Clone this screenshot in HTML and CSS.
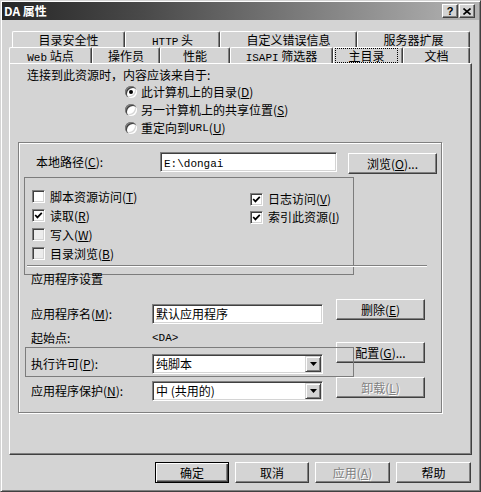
FILE: index.html
```html
<!DOCTYPE html>
<html lang="zh-CN">
<head>
<meta charset="utf-8">
<title>DA 属性</title>
<link rel="stylesheet" href="styles.css">
</head>
<body>
<div class="window">
  <div class="titlebar">
    <span class="title">DA 属性</span>
    <div class="caps">
      <span class="cap help">?</span>
      <span class="cap close"><svg width="8" height="7" viewBox="0 0 8 7"><path d="M0.5 0.5 L7.5 6.5 M7.5 0.5 L0.5 6.5" stroke="#000" stroke-width="1.6"/></svg></span>
    </div>
  </div>

  <div class="tabs">
    <div class="tabrow back">
      <div class="tab t-sec">目录安全性</div>
      <div class="tab t-http"><span class="m">HTTP</span> 头</div>
      <div class="tab t-err">自定义错误信息</div>
      <div class="tab t-ext">服务器扩展</div>
    </div>
    <div class="tabrow front">
      <div class="tab t-web"><span class="m">Web</span> 站点</div>
      <div class="tab t-op">操作员</div>
      <div class="tab t-perf">性能</div>
      <div class="tab t-isapi"><span class="m">ISAPI</span> 筛选器</div>
      <div class="tab t-home sel"><span class="focus">主目录</span></div>
      <div class="tab t-doc">文档</div>
    </div>
  </div>

  <div class="panel">
    <div class="intro">连接到此资源时，内容应该来自于:</div>
    <div class="radios">
      <div class="opt"><span class="radio on"></span>此计算机上的目录(<u>D</u>)</div>
      <div class="opt"><span class="radio"></span>另一计算机上的共享位置(<u>S</u>)</div>
      <div class="opt"><span class="radio"></span>重定向到 <span class="m">URL</span>(<u>U</u>)</div>
    </div>

    <div class="group">
      <div class="path-row">
        <span class="path-label">本地路径(<u>C</u>):</span>
        <div class="field path-field"><span class="m">E:\dongai</span></div>
        <div class="btn browse">浏览(<u>O</u>)...</div>
      </div>

      <div class="perm">
        <div class="perm-col left">
          <div class="chk-row"><span class="chk"></span>脚本资源访问(<u>T</u>)</div>
          <div class="chk-row"><span class="chk"><svg width="9" height="9" viewBox="0 0 9 9"><polyline points="1.2,4 3.4,6.4 7.8,1.8" fill="none" stroke="#000" stroke-width="1.7"/></svg></span>读取(<u>R</u>)</div>
          <div class="chk-row"><span class="chk dim"></span>写入(<u>W</u>)</div>
          <div class="chk-row"><span class="chk dim"></span>目录浏览(<u>B</u>)</div>
        </div>
        <div class="perm-col right">
          <div class="chk-row"><span class="chk"><svg width="9" height="9" viewBox="0 0 9 9"><polyline points="1.2,4 3.4,6.4 7.8,1.8" fill="none" stroke="#000" stroke-width="1.7"/></svg></span>日志访问(<u>V</u>)</div>
          <div class="chk-row"><span class="chk"><svg width="9" height="9" viewBox="0 0 9 9"><polyline points="1.2,4 3.4,6.4 7.8,1.8" fill="none" stroke="#000" stroke-width="1.7"/></svg></span>索引此资源(<u>I</u>)</div>
        </div>
      </div>

      <div class="app-head">应用程序设置</div>

      <div class="app">
        <div class="app-fields">
          <div class="arow r1">
            <span class="alabel">应用程序名(<u>M</u>):</span>
            <div class="field afield"><span class="ftext">默认应用程序</span></div>
          </div>
          <div class="arow r2">
            <span class="alabel">起始点:</span>
            <span class="m">&lt;DA&gt;</span>
          </div>
          <div class="arow r3">
            <span class="alabel">执行许可(<u>P</u>):</span>
            <div class="field afield select"><span class="ftext">纯脚本</span><span class="drop"><svg width="7" height="4" viewBox="0 0 7 4"><path d="M0 0 H7 L3.5 4 Z" fill="#000"/></svg></span></div>
          </div>
          <div class="arow r4">
            <span class="alabel">应用程序保护(<u>N</u>):</span>
            <div class="field afield select"><span class="ftext">中 (共用的)</span><span class="drop"><svg width="7" height="4" viewBox="0 0 7 4"><path d="M0 0 H7 L3.5 4 Z" fill="#000"/></svg></span></div>
          </div>
        </div>
        <div class="app-btns">
          <div class="btn abtn b1">删除(<u>E</u>)</div>
          <div class="btn abtn b2">配置(<u>G</u>)...</div>
          <div class="btn abtn b3 disabled">卸载(<u>L</u>)</div>
        </div>
      </div>

      <div class="sep-line"></div>
      <div class="exec-frame"></div>
    </div>
  </div>

  <div class="footer">
    <div class="btn fbtn w74 default">确定</div>
    <div class="btn fbtn w74">取消</div>
    <div class="btn fbtn w75 disabled">应用(<u>A</u>)</div>
    <div class="btn fbtn w75">帮助</div>
  </div>
</div>
</body>
</html>
```

FILE: styles.css
```css
* { box-sizing: border-box; }
html, body { margin: 0; padding: 0; }
body {
  width: 481px;
  height: 492px;
  overflow: hidden;
  background: #d4d4d4;
  color: #000;
  font: 12px/16px "Noto Sans CJK SC", "Noto Sans", sans-serif;
}
u { text-decoration: underline; text-underline-offset: 1px; }
.m { font-family: "Liberation Mono", "Noto Sans CJK SC", monospace; font-size: 11px; }

.window {
  width: 481px;
  height: 492px;
  background: #d4d4d4;
  border: 1px solid;
  border-color: #d4d4d4 #404040 #404040 #d4d4d4;
  box-shadow: inset 1px 1px #fff, inset -1px -1px #808080;
  padding: 1px;
}

/* title bar */
.titlebar {
  height: 18px;
  display: flex;
  align-items: center;
  justify-content: space-between;
  padding: 0 4px 0 2px;
  background: linear-gradient(to right, #262626, #4a4a4a 30%, #b4b4b4);
}
.title { color: #fff; font-weight: bold; font-size: 12px; line-height: 18px; }
.caps { display: flex; gap: 1px; }
.cap {
  width: 16px;
  height: 14px;
  background: #d4d4d4;
  border: 1px solid;
  border-color: #fff #404040 #404040 #fff;
  box-shadow: inset -1px -1px #808080;
  display: flex;
  align-items: center;
  justify-content: center;
  font: bold 11px/12px "Liberation Sans", sans-serif;
}

/* tabs */
.tabs { margin-top: 11px; }
.tabrow { display: flex; height: 16px; }
.tabrow.back { margin-left: 10px; }
.tabrow.front { margin-left: 7px; }
.tab {
  height: 16px;
  border-top: 1px solid #fff;
  border-left: 1px solid #fff;
  border-right: 1px solid #404040;
  box-shadow: inset -1px 0 #808080;
  border-radius: 2px 2px 0 0;
  text-align: center;
  line-height: 15px;
  white-space: nowrap;
}
.t-sec { width: 113px; }
.t-http { width: 95px; }
.t-err { width: 137px; }
.t-ext { width: 113px; }
.t-web { width: 83px; }
.t-op { width: 68px; }
.t-perf { width: 70px; }
.t-isapi { width: 103px; }
.t-home { width: 70px; padding: 0 4px 0 1px; }
.t-doc { width: 67px; }
.focus {
  display: block;
  height: 15px;
  border: 1px dotted #000;
  line-height: 13px;
}

/* panel */
.panel {
  margin-left: 7px;
  width: 463px;
  height: 392px;
  border: 1px solid;
  border-color: #fff #404040 #404040 #fff;
  box-shadow: inset -1px -1px #808080;
}
.intro { margin: 3px 0 0 17px; line-height: 16px; }
.radios { margin-left: 115px; }
.opt { height: 18px; display: flex; align-items: center; }
.radio {
  position: relative;
  width: 12px;
  height: 12px;
  border-radius: 50%;
  background: #fff;
  margin-right: 4px;
  box-shadow: inset 1px 1px #808080, inset 2px 2px #404040, inset -1px -1px #fff, inset -2px -2px #d4d4d4;
}
.radio.on::after {
  content: "";
  position: absolute;
  left: 4px;
  top: 4px;
  width: 4px;
  height: 4px;
  border-radius: 50%;
  background: #000;
}

.group {
  position: relative;
  margin: 5px 0 0 8px;
  width: 424px;
  height: 271px;
  border: 1px solid #808080;
  box-shadow: inset 1px 1px #fff, 1px 1px #fff;
}

.field {
  background: #fff;
  border: 1px solid;
  border-color: #808080 #fff #fff #808080;
  box-shadow: inset 1px 1px #404040, inset -1px -1px #d4d4d4;
}
.btn {
  height: 21px;
  border: 1px solid;
  border-color: #fff #404040 #404040 #fff;
  box-shadow: inset -1px -1px #808080;
  background: #d4d4d4;
  display: flex;
  align-items: center;
  justify-content: center;
  line-height: 16px;
  white-space: nowrap;
}
.btn.default {
  border: 1px solid #000;
  box-shadow: inset 1px 1px #fff, inset -1px -1px #404040, inset -2px -2px #808080;
}
.disabled { color: #808080; text-shadow: 1px 1px #fff; }

.path-row { display: flex; align-items: flex-start; height: 22px; margin-top: 9px; }
.path-label { width: 141px; padding-left: 17px; line-height: 20px; }
.path-field { width: 177px; height: 20px; padding-left: 3px; line-height: 18px; }
.browse { width: 89px; margin: 1px 0 0 11px; }

.perm {
  display: flex;
  margin: 3px 0 0 5px;
  width: 330px;
  height: 98px;
  border: 1px solid #7c7c7c;
}
.perm-col.left { width: 225px; padding: 9px 0 0 7px; }
.perm-col.right { padding-top: 12px; }
.chk-row { height: 19px; display: flex; align-items: center; white-space: nowrap; }
.perm-col.right .chk-row { height: 18px; }
.chk {
  width: 13px;
  height: 13px;
  margin-right: 5px;
  background: #fff;
  border: 1px solid;
  border-color: #808080 #fff #fff #808080;
  box-shadow: inset 1px 1px #404040, inset -1px -1px #d4d4d4;
  display: flex;
  align-items: center;
  justify-content: center;
}
.chk.dim { background: #ececec; }

.app-head { margin-top: -4px; padding-left: 12px; line-height: 16px; }

.app { display: flex; }
.app-fields { padding-left: 12px; }
.arow { display: flex; align-items: center; height: 20px; }
.arow.r1 { margin-top: 17px; }
.arow.r2 { margin-top: 4px; }
.arow.r3 { margin-top: 6px; }
.arow.r4 { margin-top: 7px; }
.alabel { width: 121px; white-space: nowrap; }
.afield { width: 171px; height: 20px; display: flex; padding: 1px; }
.ftext { flex: 1; padding-left: 2px; line-height: 16px; white-space: nowrap; }
.drop {
  width: 16px;
  height: 16px;
  border: 1px solid;
  border-color: #d4d4d4 #404040 #404040 #d4d4d4;
  box-shadow: inset 1px 1px #fff, inset -1px -1px #808080;
  background: #d4d4d4;
  display: flex;
  align-items: center;
  justify-content: center;
}
.app-btns { margin-left: 13px; }
.abtn { width: 89px; }
.abtn.b1 { margin-top: 12px; }
.abtn.b2 { margin-top: 22px; }
.abtn.b3 { margin-top: 14px; }

.sep-line {
  position: absolute;
  left: 8px;
  top: 122px;
  width: 400px;
  height: 2px;
  border-top: 1px solid #808080;
  border-bottom: 1px solid #fff;
}
.exec-frame {
  position: absolute;
  left: 6px;
  top: 204px;
  width: 329px;
  height: 30px;
  border: 1px solid #7c7c7c;
}

/* footer */
.footer {
  display: flex;
  justify-content: flex-end;
  gap: 6px;
  margin-top: 7px;
  padding-right: 8px;
}
.w74 { width: 74px; }
.w75 { width: 75px; }
```
